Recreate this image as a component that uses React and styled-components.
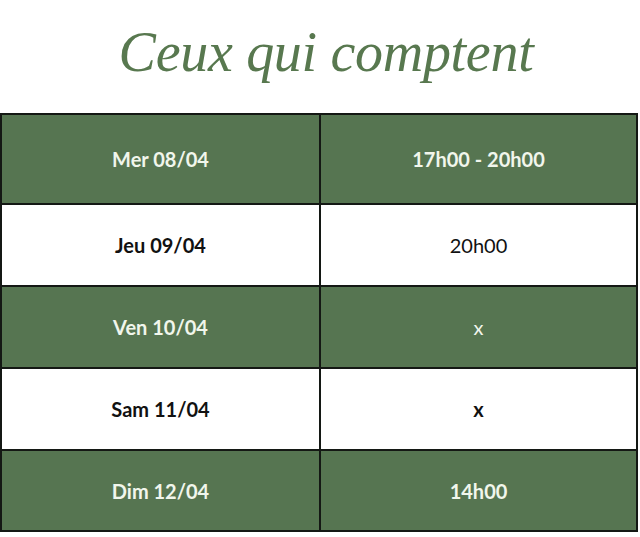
import React from "react";
import styled, { createGlobalStyle } from "styled-components";

const GlobalStyle = createGlobalStyle`
  html, body {
    margin: 0;
    padding: 0;
    background: #fff;
  }
  body {
    font-family: Lato, "Open Sans", sans-serif;
  }
`;

const Page = styled.div`
  width: 640px;
  height: 537px;
  background: #fff;
  overflow: hidden;
`;

const Header = styled.header`
  height: 113px;
  display: flex;
  align-items: center;
  justify-content: center;
  padding: 0 0 10px 12px;
  box-sizing: border-box;
`;

const Title = styled.h1`
  margin: 0;
  font-family: "Liberation Serif", "DejaVu Serif", serif;
  font-style: italic;
  font-weight: 400;
  font-size: 56px;
  line-height: 1;
  color: #58784f;
  letter-spacing: -0.3px;
`;

const Table = styled.div`
  width: 638px;
  display: grid;
  grid-template-columns: 317px 315px;
  grid-template-rows: 88px 80px 80px 80px 79px;
  gap: 2px;
  padding: 2px;
  background: #141814;
  box-sizing: border-box;
`;

const Cell = styled.div`
  display: flex;
  align-items: center;
  justify-content: center;
  background: ${(p) => (p.$green ? "#567551" : "#fff")};
  color: ${(p) => (p.$green ? "#f1f6ec" : "#111")};
  font-size: 20px;
  font-weight: ${(p) => (p.$bold ? 700 : 400)};
`;

const rows = [
  { day: "Mer 08/04", time: "17h00 - 20h00", green: true, boldTime: true },
  { day: "Jeu 09/04", time: "20h00", green: false, boldTime: false },
  { day: "Ven 10/04", time: "x", green: true, boldTime: false },
  { day: "Sam 11/04", time: "x", green: false, boldTime: true },
  { day: "Dim 12/04", time: "14h00", green: true, boldTime: true },
];

export default function App() {
  return (
    <Page>
      <GlobalStyle />
      <Header>
        <Title>Ceux qui comptent</Title>
      </Header>
      <Table>
        {rows.map((r) => (
          <React.Fragment key={r.day}>
            <Cell $green={r.green} $bold>
              {r.day}
            </Cell>
            <Cell $green={r.green} $bold={r.boldTime}>
              {r.time}
            </Cell>
          </React.Fragment>
        ))}
      </Table>
    </Page>
  );
}
